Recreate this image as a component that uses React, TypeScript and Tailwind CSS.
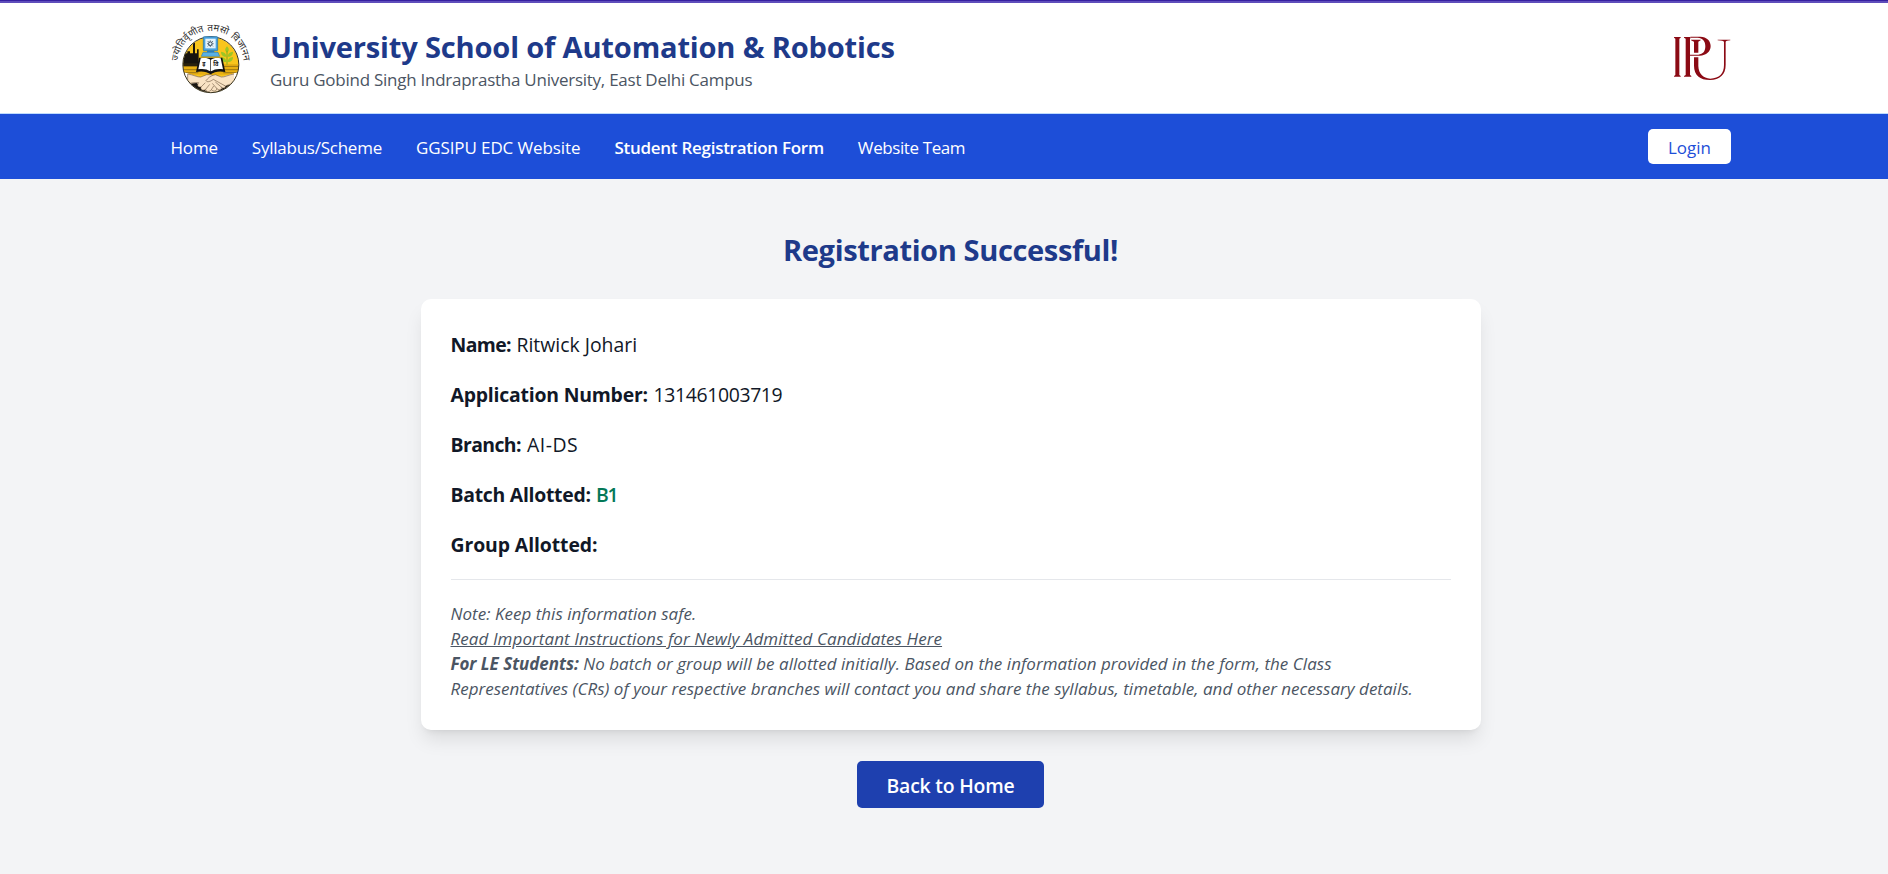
import type { ReactNode } from "react";

function Emblem() {
  return (
    <svg className="mt-[16px] h-[78.4px] w-[85px] shrink-0 overflow-visible" viewBox="57 55 255 235" fill="none">
      <defs>
        <clipPath id="disc">
          <circle cx="182.500" cy="192" r="83" />
        </clipPath>
        <path id="arc" d="M84 189 A98.500 98.500 0 0 1 281 189" />
      </defs>
      <text fontSize="29" fill="#2b2b2b" wordSpacing="3" fontFamily="Noto Sans, sans-serif" textAnchor="middle">
        <textPath href="#arc" startOffset="50%">ज्योतिर्वृणीत तमसो विजानन</textPath>
      </text>
      <g clipPath="url(#disc)">
        <rect x="95" y="105" width="175" height="175" fill="#f9c51c" />
        <path d="M95 190H270V222H95Z" fill="#e9b012" />
        <path d="M97 197H150M97 207H150M215 197H268M215 207H268M97 216H145M220 216H268" stroke="#8a6a12" strokeWidth="2.500" />
        <path d="M95 190V166L104 162V158H112V152H120V158H129V126H135V158H141V146H146V190Z" fill="#17140f" />
        <path d="M128 126C130 118 140 120 146 112" stroke="#8d7420" strokeWidth="2" />
        <path d="M95 188H150V196H95Z" fill="#2a220f" />
        <g fill="#9cc625">
          <path d="M231 156C222 150 226 142 231 137C237 143 239 150 231 156Z" />
          <path d="M229 168C216 169 213 160 213 153C223 154 229 159 229 168Z" />
          <path d="M233 168C246 169 249 160 249 153C239 154 233 159 233 168Z" />
          <path d="M229 184C216 185 213 176 213 169C223 170 229 175 229 184Z" />
          <path d="M233 184C246 185 249 176 249 169C239 170 233 175 233 184Z" />
        </g>
        <path d="M231 150V192" stroke="#7fae1d" strokeWidth="3" />
        <path d="M95 216L113 218L150 230L182 222L216 228L252 218L270 216V282H95Z" fill="#f7dfc0" />
        <path d="M95 256L113 250L140 247L160 266L182 280H95Z" fill="#1a1713" />
        <path d="M270 256L252 250L230 254L210 268L182 280H270Z" fill="#1a1713" />
        <path d="M95 214L113 218V250L95 262Z" fill="#fff" />
        <path d="M270 214L252 218V250L270 262Z" fill="#fff" />
        <path d="M113 220C130 222 142 230 152 229L170 222L184 222L205 238L226 256C228 262 220 264 214 259C216 268 207 270 200 263C200 273 190 273 184 267C178 275 168 274 167 266C158 272 150 266 153 259C142 260 141 252 146 246C134 244 122 248 113 249Z" fill="#f9e3c4" stroke="#5a4630" strokeWidth="1.600" />
        <path d="M252 220C236 222 224 230 214 229L196 222C182 224 172 234 168 240C172 246 182 242 190 236L226 256C236 252 244 248 252 249" fill="#f9e3c4" stroke="#5a4630" strokeWidth="1.600" />
        <path d="M153 259L166 246M167 266L179 251M184 267L191 256M200 263L187 248M214 259L196 244" stroke="#5a4630" strokeWidth="1.600" />
      </g>
      <circle cx="182.500" cy="192" r="84" stroke="#37321f" strokeWidth="3" />
      <rect x="160" y="108" width="43" height="42" rx="2" fill="#4aa3df" stroke="#1f6fa8" strokeWidth="2" />
      <rect x="166" y="114" width="31" height="29" fill="#e4f3fb" />
      <circle cx="181" cy="129" r="5.500" stroke="#2a3c4c" strokeWidth="3" />
      <path d="M173 121L176 124M189 121L186 124M173 137L176 134M189 137L186 134M181 119V122M181 136V139M171 129H174M188 129H191" stroke="#2a3c4c" strokeWidth="2" />
      <path d="M171 150H193V156H171Z" fill="#2d7fb8" />
      <path d="M159 155H204L209 167H154Z" fill="#58b0e6" stroke="#1f6fa8" strokeWidth="1.500" />
      <path d="M147 171L138 214C155 210 172 213 182 221C192 213 209 210 226 214L217 171Z" fill="#111" />
      <path d="M152 173C164 170 175 172 181 177V212C171 205 158 203 145 206Z" fill="#fff" />
      <path d="M212 173C200 170 189 172 183 177V212C193 205 206 203 219 206Z" fill="#fff" />
      <text x="157" y="197" fontSize="18" fontWeight="700" fill="#111" fontFamily="Noto Sans, sans-serif">इ</text>
      <text x="190" y="197" fontSize="17" fontWeight="700" fill="#111" fontFamily="Noto Sans, sans-serif">वि</text>
    </svg>
  );
}

function IpuLogo() {
  return (
    <svg className="mt-[30.5px] h-[48.3px] w-[60px] shrink-0" viewBox="95 100 180 145" fill="none">
      <g fill="#8b0a14">
        <path d="M101 109H121V111L117 114V223L121 226V228H101V226L105 223V114L101 111Z" />
        <path d="M131 109H150V114L149 114V223L153 226V228H131V226L136 223V114L131 111Z" />
        <path d="M150 108H180C199 109 211 120 211 136C211 153 198 164 178 165H149V162H174C188 161 195 152 195 137C195 121 187 112 172 111H150Z" />
        <path d="M152 117H181V119L174 123V156H161V123L152 119Z" />
        <path d="M161 170H174V196C175 219 188 233 210 234C237 233 251 219 251 193V124C251 121 243 120 232 119V117H270V119C262 120 256 121 256 124V193C256 222 238 238 209 238C179 238 161 223 161 195Z" />
      </g>
    </svg>
  );
}

const links = [
  { label: "Home", cls: "tracking-[-0.15px]" },
  { label: "Syllabus/Scheme", cls: "tracking-[-0.227px]" },
  { label: "GGSIPU EDC Website", cls: "tracking-[-0.09px]" },
  { label: "Student Registration Form", cls: "font-semibold tracking-[-0.257px]" },
  { label: "Website Team", cls: "tracking-[-0.385px]" },
];

function Row({ label, labelClass, children }: { label: string; labelClass: string; children?: ReactNode }) {
  return (
    <p className="flex">
      <strong className={`shrink-0 whitespace-nowrap font-bold ${labelClass}`}>{label}</strong>
      {children}
    </p>
  );
}

export default function App() {
  return (
    <div className="h-[874px] w-full overflow-hidden bg-[#f3f4f6] font-['Open_Sans','Noto_Sans',sans-serif] text-[#111827]">
      <div className="w-[1901px]">
        <div className="h-[3px] border-t border-[#3620a0] bg-[#5f4dbb]" />
        <header className="flex h-[111px] items-start justify-between border-b border-[#bfdbfe] bg-white pr-[169.5px] pl-[168.5px]">
          <div className="flex items-start">
            <Emblem />
            <div className="mt-[24px] ml-[16.5px] whitespace-nowrap">
              <h1 className="text-[29.1px] leading-[40px] font-bold tracking-[-0.185px] text-[#1e3a8a]">
                University School of Automation &amp; Robotics
              </h1>
              <p className="text-[16.98px] leading-[25px] tracking-[-0.244px] text-[#4b5563]">
                Guru Gobind Singh Indraprastha University, East Delhi Campus
              </p>
            </div>
          </div>
          <IpuLogo />
        </header>

        <nav className="flex h-[65px] items-center justify-between bg-[#1d4ed8] pr-[170px] pl-[170.5px] text-[16.98px] leading-[25px] text-white">
          <ul className="flex gap-[34px] pt-[2px] whitespace-nowrap">
            {links.map((l) => (
              <li key={l.label} className={l.cls}>
                {l.label}
              </li>
            ))}
          </ul>
          <button className="h-[35px] w-[83px] rounded-[5px] bg-white pt-[1px] text-[#1d4ed8]">Login</button>
        </nav>

        <main className="flex flex-col items-center pt-[51px]">
          <h2 className="text-[29.1px] leading-[40px] font-bold tracking-[-0.401px] text-[#1e3a8a]">
            Registration Successful!
          </h2>

          <section className="mt-[29px] w-[1060px] rounded-[10px] bg-white px-[30px] pt-[31px] pb-[29px] shadow-[0_12.5px_18.75px_-3.75px_rgba(0,0,0,0.1),0_5px_7.5px_-5px_rgba(0,0,0,0.1)]">
            <div className="flex flex-col gap-[20px] text-[19.4px] leading-[30px]">
              <Row label="Name:" labelClass="w-[66px] tracking-[-0.6px]">
                <span>Ritwick Johari</span>
              </Row>
              <Row label="Application Number:" labelClass="w-[203px] tracking-[-0.2px]">
                <span className="tracking-[-0.35px]">131461003719</span>
              </Row>
              <Row label="Branch:" labelClass="w-[76.5px] tracking-[-0.6px]">
                <span className="tracking-[0.5px]">AI-DS</span>
              </Row>
              <Row label="Batch Allotted:" labelClass="w-[145.5px] tracking-[-0.27px]">
                <span className="font-semibold tracking-[-1.4px] text-[#047857]">B1</span>
              </Row>
              <Row label="Group Allotted:" labelClass="tracking-[-0.09px]" />
            </div>

            <div className="mt-[19px] border-t border-[#e5e7eb] pt-[21px] text-[16.98px] leading-[25px] whitespace-nowrap text-[#4b5563] italic">
              <p className="tracking-[0.032px]">Note: Keep this information safe.</p>
              <p className="tracking-[0.094px]">
                <a className="underline">Read Important Instructions for Newly Admitted Candidates Here</a>
              </p>
              <p className="tracking-[0.05px]">
                <strong className="font-bold tracking-[-0.03px]">For LE Students:</strong> No batch or group will be
                allotted initially. Based on the information provided in the form, the Class
              </p>
              <p className="tracking-[0.025px]">
                Representatives (CRs) of your respective branches will contact you and share the syllabus,
                timetable, and other necessary details.
              </p>
            </div>
          </section>

          <button className="mt-[31px] h-[47px] w-[187px] rounded-[5px] bg-[#1e40af] pt-[2px] text-[19.4px] leading-[30px] font-semibold tracking-[-0.205px] text-white">
            Back to Home
          </button>
        </main>
      </div>
    </div>
  );
}
